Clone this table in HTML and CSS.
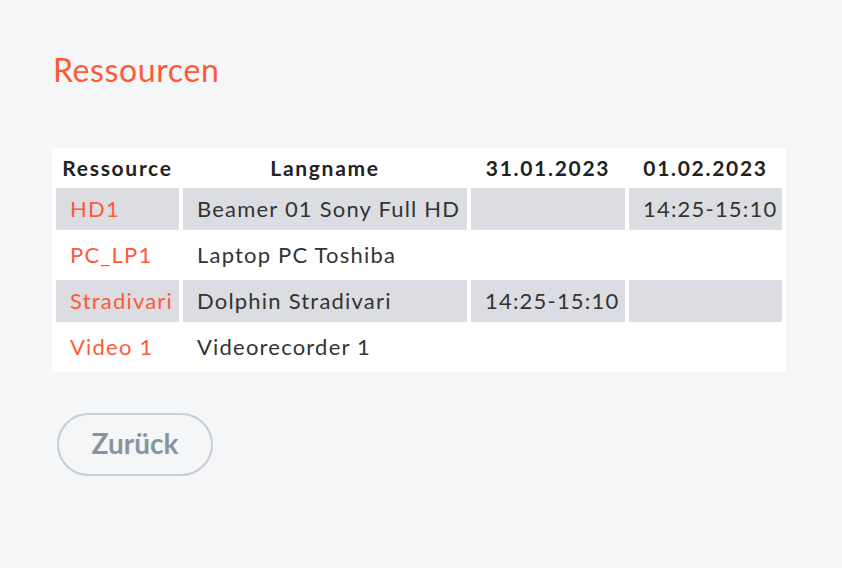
FILE: index.html
```html
<!DOCTYPE html>
<html lang="de">
<head>
<meta charset="utf-8">
<title>Ressourcen</title>
<link rel="stylesheet" href="styles.css">
</head>
<body>
<main class="page">
  <h1 class="title">Ressourcen</h1>
  <table class="res-table">
    <colgroup>
      <col class="c1"><col class="c2"><col class="c3"><col class="c4">
    </colgroup>
    <thead>
      <tr>
        <th>Ressource</th>
        <th>Langname</th>
        <th>31.01.2023</th>
        <th>01.02.2023</th>
      </tr>
    </thead>
    <tbody>
      <tr class="shade">
        <td class="key">HD1</td>
        <td>Beamer 01 Sony Full HD</td>
        <td></td>
        <td>14:25-15:10</td>
      </tr>
      <tr>
        <td class="key">PC_LP1</td>
        <td>Laptop PC Toshiba</td>
        <td></td>
        <td></td>
      </tr>
      <tr class="shade">
        <td class="key">Stradivari</td>
        <td>Dolphin Stradivari</td>
        <td>14:25-15:10</td>
        <td></td>
      </tr>
      <tr>
        <td class="key">Video 1</td>
        <td>Videorecorder 1</td>
        <td></td>
        <td></td>
      </tr>
    </tbody>
  </table>
  <button class="back" type="button">Zurück</button>
</main>
</body>
</html>
```

FILE: styles.css
```css
html, body {
  margin: 0;
  padding: 0;
  background: #f5f6f8;
}
body {
  font-family: "Lato", "Noto Sans", sans-serif;
  color: #333333;
}
.page {
  padding: 50px 0 0 52px;
}
.title {
  margin: 0 0 0 1px;
  font-size: 32px;
  line-height: 40px;
  font-weight: 400;
  letter-spacing: 0.6px;
  color: #ff5a36;
}
.res-table {
  margin-top: 58px;
  background: #ffffff;
  border-collapse: separate;
  border-spacing: 4px;
  table-layout: fixed;
  width: 734px;
  font-size: 22px;
  letter-spacing: 1.2px;
}
.c1 { width: 123px; }
.c2 { width: 284px; }
.c3 { width: 154px; }
.c4 { width: 153px; }
.res-table th {
  height: 30px;
  padding: 0 0 2px;
  font-weight: 700;
  font-size: 21px;
  letter-spacing: 1.7px;
  text-align: center;
  color: #222222;
  white-space: nowrap;
}
.res-table td {
  height: 42px;
  padding: 0 0 0 14px;
  line-height: 42px;
  text-align: left;
  white-space: nowrap;
  color: #333333;
}
.res-table tr.shade td {
  background: #dcdde2;
}
.res-table td.key {
  color: #ff5a36;
}
.back {
  display: block;
  margin: 41px 0 0 5px;
  width: 156px;
  height: 63px;
  border: 2px solid #c9cdd2;
  border-radius: 32px;
  background: transparent;
  font-family: inherit;
  font-size: 28px;
  font-weight: 700;
  color: #8a949e;
  padding: 0 0 4px;
}
```
